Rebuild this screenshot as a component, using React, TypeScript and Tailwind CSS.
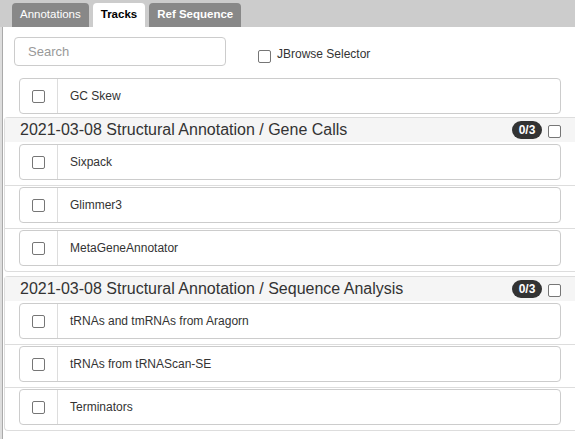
import React from "react";

const Box = () => (
  <span className="inline-block w-[13px] h-[13px] border border-[#767676] rounded-[2px] bg-white" />
);

function Row({ label }: { label: string }) {
  return (
    <div className="flex h-[36px] border border-[#ccc] rounded-[4px] bg-white">
      <div className="w-[38px] flex items-center justify-center border-r border-[#ddd]">
        <Box />
      </div>
      <div className="flex items-center pl-[12px] text-[12px] text-[#333]">{label}</div>
    </div>
  );
}

function Section({ title, items }: { title: string; items: string[] }) {
  return (
    <div className="border-t border-l border-b border-[#ddd] rounded-l-[4px] w-[571px]">
      <div className="h-[24px] bg-[#f5f5f5] flex items-center pl-[15px] pr-[14px]">
        <span className="text-[16px] text-[#333] flex-1">{title}</span>
        <span className="bg-[#333] text-white text-[12px] font-bold rounded-full h-[18px] w-[30px] flex items-center justify-center">
          0/3
        </span>
        <span className="ml-[6px] mt-[2px] flex">
          <Box />
        </span>
      </div>
      {items.map((it, i) => (
        <div
          key={it}
          className={`pl-[14px] pr-[14px] pb-[5px] ${i === 0 ? "pt-[2px]" : "pt-[1px]"} ${
            i < items.length - 1 ? "border-b border-[#ddd]" : ""
          }`}
        >
          <Row label={it} />
        </div>
      ))}
    </div>
  );
}

export default function App() {
  return (
    <div className="w-[575px] h-[439px] overflow-hidden bg-white font-['Liberation_Sans',Arial,sans-serif] flex flex-col">
      <div className="h-[27px] bg-[#ccc] flex items-end pl-[12px] gap-[4px] shrink-0">
        <div className="h-[24px] px-[8px] bg-[#888] text-white text-[11.5px] rounded-t-[4px] flex items-center">
          Annotations
        </div>
        <div className="h-[24px] px-[8px] bg-white text-black text-[11.5px] font-bold rounded-t-[4px] flex items-center">
          Tracks
        </div>
        <div className="h-[24px] px-[8px] bg-[#888] text-white text-[11.5px] font-bold rounded-t-[4px] flex items-center">
          Ref Sequence
        </div>
      </div>
      <div className="flex-1 border-l-2 border-[#ddd] flex flex-col">
        <div className="flex-1 border-l border-[#aaa] pl-[1px] pt-[10px]">
          <div className="flex items-start">
            <input
              placeholder="Search"
              className="ml-[10px] w-[212px] h-[29px] border border-[#ccc] rounded-[4px] px-[13px] text-[13px] placeholder:text-[#999] outline-none"
            />
            <span className="ml-[32px] mt-[10px] flex items-start">
              <span className="mt-[3px] flex">
                <Box />
              </span>
              <span className="ml-[6px] text-[12px] leading-[14px] text-[#333]">JBrowse Selector</span>
            </span>
          </div>
          <div className="ml-[15px] mr-[14px] mt-[12px] mb-[3px]">
            <Row label="GC Skew" />
          </div>
          <Section
            title="2021-03-08 Structural Annotation / Gene Calls"
            items={["Sixpack", "Glimmer3", "MetaGeneAnnotator"]}
          />
          <div className="h-[4px]" />
          <Section
            title="2021-03-08 Structural Annotation / Sequence Analysis"
            items={["tRNAs and tmRNAs from Aragorn", "tRNAs from tRNAScan-SE", "Terminators"]}
          />
        </div>
      </div>
    </div>
  );
}
